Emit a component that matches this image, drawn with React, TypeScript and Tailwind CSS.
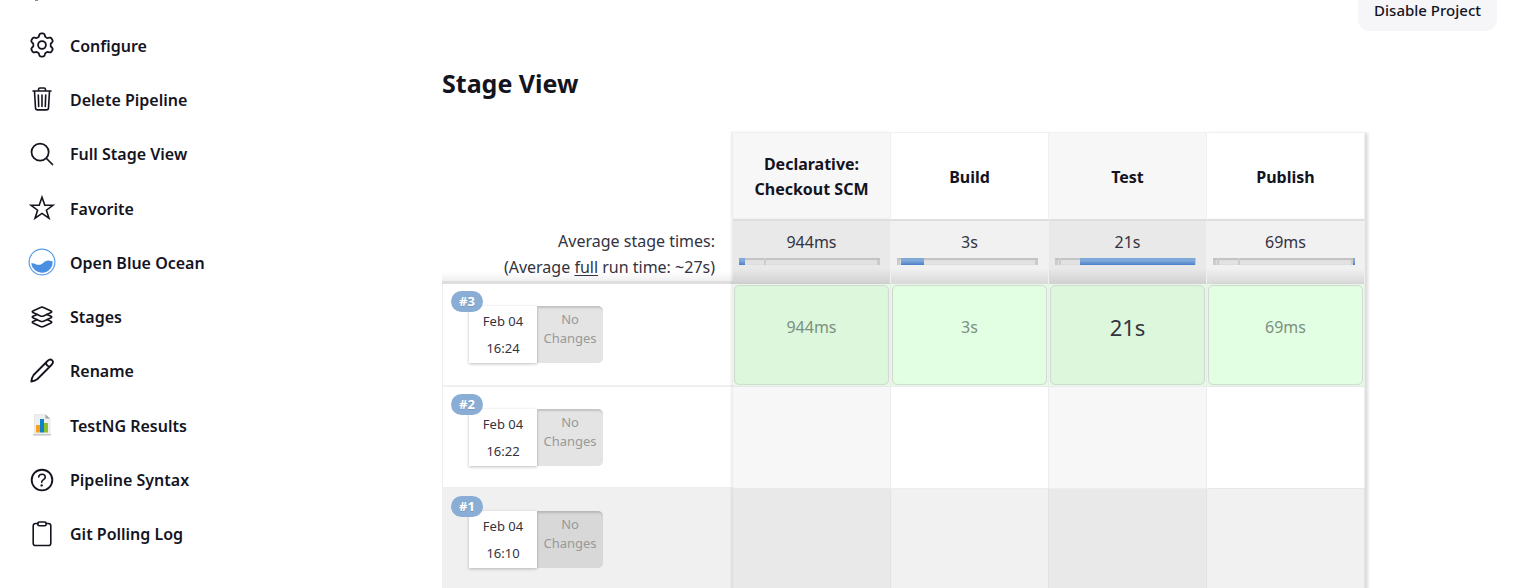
import React from 'react';
import { IoSearchOutline, IoLayersOutline, IoHelpCircleOutline } from 'react-icons/io5';

type IconProps = { children: React.ReactNode };

function Stroke({ children }: IconProps) {
  return (
    <svg viewBox="0 0 26 26" className="size-[26px]" fill="none" stroke="currentColor" strokeWidth="1.6" strokeLinecap="round" strokeLinejoin="round" aria-hidden="true">
      {children}
    </svg>
  );
}

// Six soft lobes around the hub, one of them pointing straight up.
const gearOutline =
  'M' +
  Array.from({ length: 120 }, (_, k) => {
    const a = (k / 120) * Math.PI * 2;
    const r = 10.1 + 1.5 * Math.tanh(2 * Math.cos(6 * a) + 0.2);
    return `${(13 + r * Math.sin(a)).toFixed(2)} ${(13 - r * Math.cos(a)).toFixed(2)}`;
  }).join('L') +
  'Z';

const gear = (
  <Stroke>
    <path d={gearOutline} strokeWidth="1.8" />
    <circle cx="13" cy="13" r="3.9" strokeWidth="1.8" />
  </Stroke>
);

const trash = (
  <Stroke>
    <path d="M4 5h18M5.5 5l1 17a2 2 0 0 0 2 1.9h9a2 2 0 0 0 2-1.900l1-17M9.500 5V3.500a1.500 1.500 0 0 1 1.500-1.500h4a1.500 1.500 0 0 1 1.500 1.500V5M9.300 9l.4 11.500M13 9v11.500M16.700 9l-.4 11.500" />
  </Stroke>
);

const star = (
  <Stroke>
    <path strokeLinejoin="miter" d="M13 2.200l2.800 8h8.400l-6.800 5 2.600 8L13 18.400l-7 4.800 2.600-8-6.800-5h8.400z" />
  </Stroke>
);

const ocean = (
  <svg viewBox="0 0 28 28" className="size-7" aria-hidden="true">
    <circle cx="14" cy="14" r="12.900" fill="#fff" stroke="#5b9ee8" strokeWidth="1.200" />
    <path d="M3.100 15.300c3-.8 4.600 1.600 7.700 1.500 4-.2 5.500-4.600 9.700-4.400 1.700.1 3.200.5 4.300 1.200A10.900 10.900 0 0 1 3.100 15.300z" fill="#4a90e2" />
  </svg>
);

const pencil = (
  <Stroke>
    <path strokeWidth="1.8" d="M2.300 23.700c.3-2.600 1-5 2.300-6.700L18.500 3c1.700-1.600 3.400-1.900 4.700-.7 1.300 1.300.9 3-.8 4.700L8.500 21c-1.700 1.400-3.800 2.300-6.200 2.700zM17 4.500c.2 2.200 1.700 3.900 4 4" />
  </Stroke>
);

const chart = (
  <svg viewBox="0 0 20 22" className="h-[22px] w-5" aria-hidden="true">
    <path d="M2.500.5h11l4.500 4V21h-15.500z" fill="#eeeff1" stroke="#dcdddf" strokeWidth=".6" />
    <path d="M13.500.5l4.500 4h-4.500z" fill="#a3a3a3" />
    <path d="M1 20h18v1.500H1z" fill="#c9c9c9" />
    <rect x="4" y="11" width="4" height="7.500" fill="#f9a11b" />
    <rect x="8" y="5" width="4" height="13.500" fill="#0f7fc8" />
    <rect x="12" y="9" width="4" height="9.500" fill="#8ac02c" />
  </svg>
);

const clipboard = (
  <Stroke>
    <path d="M9 2.500H6.500a2.300 2.300 0 0 0-2.300 2.300v17.400a2.300 2.300 0 0 0 2.300 2.300h13a2.300 2.300 0 0 0 2.300-2.300V4.800a2.300 2.300 0 0 0-2.300-2.300H17" />
    <rect x="8.800" y="1" width="8.400" height="3.800" rx="1.500" />
  </Stroke>
);

const tasks = [
  { label: 'Configure', icon: gear },
  { label: 'Delete Pipeline', icon: trash },
  { label: 'Full Stage View', icon: <IoSearchOutline className="size-7" /> },
  { label: 'Favorite', icon: star },
  { label: 'Open Blue Ocean', icon: ocean },
  { label: 'Stages', icon: <IoLayersOutline className="size-[26px]" /> },
  { label: 'Rename', icon: pencil },
  { label: 'TestNG Results', icon: chart },
  { label: 'Pipeline Syntax', icon: <IoHelpCircleOutline className="size-[30px] shrink-0" /> },
  { label: 'Git Polling Log', icon: clipboard },
];

// Bar positions are percentages of the full run.
const stages = [
  { name: 'Declarative: Checkout SCM', time: '944ms', marks: [18], start: 0, width: 4 },
  { name: 'Build', time: '3s', marks: [], start: 3, width: 16 },
  { name: 'Test', time: '21s', marks: [3], start: 18, width: 81 },
  { name: 'Publish', time: '69ms', marks: [3, 18], start: 99, width: 1 },
];

const runs = [
  { id: '#3', date: 'Feb 04', time: '16:24', done: true, aborted: false },
  { id: '#2', date: 'Feb 04', time: '16:22', done: false, aborted: false },
  { id: '#1', date: 'Feb 04', time: '16:10', done: false, aborted: true },
];

function edge(i: number) {
  if (i === 0) return 'shadow-[-2px_0_2px_rgba(0,0,0,0.08)]';
  if (i === stages.length - 1) return 'shadow-[3px_1px_3px_rgba(0,0,0,0.14)]';
  return '';
}

function runCell(aborted: boolean, done: boolean, odd: boolean) {
  if (aborted) return odd ? 'border-[#e2e2e2] bg-[#f1f1f1]' : 'border-[#e2e2e2] bg-[#e9e9e9]';
  if (done) return 'border-[#eaeeea] bg-[#e6f8e6]';
  return odd ? 'border-[#ededed] bg-white' : 'border-[#ededed] bg-[#f7f7f7]';
}

export default function App() {
  return (
    <div className="flex h-screen overflow-hidden bg-white font-['Noto_Sans','Open_Sans',sans-serif] text-[#14141f]">
      <aside className="w-[442px] shrink-0 pl-7">
        <div className="flex h-[18px] items-start pl-[7px]">
          <span className="h-px w-[3px] bg-[#8a8a90]" />
        </div>
        <nav aria-label="Tasks" className="grid h-[543px] auto-rows-fr">
          {tasks.map((t) => (
            <a key={t.label} href="#" className="flex items-center gap-3.5 text-base font-semibold">
              <span className="flex w-7 shrink-0 justify-center">{t.icon}</span>
              <span className="pt-px">{t.label}</span>
            </a>
          ))}
        </nav>
      </aside>
      <main className="min-w-0 flex-1">
        <div className="flex justify-end pr-[27px]">
          <button type="button" className="-mt-3 h-[43px] rounded-xl bg-[#f6f6f9] px-4 pt-px text-[15px] font-medium">
            Disable Project
          </button>
        </div>
        <h2 className="mt-[35px] text-[25px] leading-[34px] font-bold">Stage View</h2>
        <table className="mt-8 table-fixed border-separate border-spacing-0">
          <colgroup>
            <col className="w-[291px]" />
            {stages.map((s) => (
              <col key={s.name} className="w-[158px]" />
            ))}
          </colgroup>
          <thead>
            <tr className="h-[87px]">
              <td />
              {stages.map((s, i) => (
                <th
                  key={s.name}
                  scope="col"
                  className={`border-t border-r border-[#f0f0f0] px-3 pt-0.5 text-base leading-[25px] font-bold ${i % 2 ? 'bg-white' : 'bg-[#f7f7f7]'} ${edge(i)}`}
                >
                  {s.name}
                </th>
              ))}
            </tr>
            <tr className="h-[65px]">
              <th
                scope="row"
                className="border-b-[3px] border-[#dedede] bg-linear-to-b from-white from-85% to-[#f0f0f0] pt-2 pr-[18px] text-right text-base leading-[26px] font-normal text-[#333340]"
              >
                Average stage times:
                <br />
                (Average <u className="underline-offset-2">full</u> run time: ~27s)
              </th>
              {stages.map((s, i) => (
                <td
                  key={s.name}
                  className={`border-t-2 border-r border-[#dedede] border-r-[#f0f0f0] bg-linear-to-b from-75% px-1.5 text-center text-base text-[#333340] ${i % 2 ? 'from-[#f1f1f1] to-[#d8d8d8]' : 'from-[#e9e9e9] to-[#d0d0d0]'} ${edge(i)}`}
                >
                  <div className="leading-6">{s.time}</div>
                  <div className="relative mt-1 mr-1 mb-2.5 h-[7px] bg-[#e2e2e2] shadow-[inset_0_2px_1px_#c2c2c2,inset_3px_0_1px_#cccccc,inset_-3px_0_1px_#cccccc]">
                    {s.marks.map((m) => (
                      <span key={m} className="absolute inset-y-0 w-0.5 bg-[#cccccc]" style={{ left: `${m}%` }} />
                    ))}
                    <span
                      className="absolute inset-y-0 min-w-0.5 bg-linear-to-b from-[#7fa9d8] from-40% to-[#4a7fcb]"
                      style={{ left: `${s.start}%`, width: `${s.width}%` }}
                    />
                  </div>
                </td>
              ))}
            </tr>
          </thead>
          <tbody>
            {runs.map((r) => (
              <tr key={r.id} className={r.done ? 'h-[103px]' : 'h-[102px]'}>
                <th
                  scope="row"
                  className={`border-b-2 border-l border-[#efefef] p-0 pl-[26px] text-left align-top font-normal ${r.aborted ? 'bg-[#f0f0f0]' : 'bg-white'}`}
                >
                  <div className="relative mt-[22px] flex h-[57px] w-[134px] text-center">
                    <div className="w-[68px] bg-white pt-0.5 text-[13px] leading-[27px] text-[#333340] shadow-[0_1px_3px_rgba(0,0,0,0.25)]">
                      <div>{r.date}</div>
                      <div>{r.time}</div>
                    </div>
                    <div
                      className={`flex-1 rounded-r-[5px] pt-1 text-[13px] leading-[19px] text-[#999999] shadow-[inset_1px_2px_2px_rgba(0,0,0,0.15)] ${r.aborted ? 'bg-[#d8d8d8]' : 'bg-[#e4e4e4]'}`}
                    >
                      No Changes
                    </div>
                    <span className="absolute -top-[15px] -left-[18px] rounded-full bg-[#89add4] px-2 text-[13px] leading-[21px] font-bold text-white text-shadow-2xs">
                      {r.id}
                    </span>
                  </div>
                </th>
                {stages.map((s, i) => (
                  <td
                    key={s.name}
                    className={`border-r border-b p-0 text-center ${runCell(r.aborted, r.done, i % 2 === 1)} ${edge(i)}`}
                  >
                    {r.done && (
                      <div
                        className={`mx-px flex h-[100px] items-center justify-center rounded-[5px] border border-[#d0dcd0] pb-4 shadow-[inset_0_0_1px_#cfdccf] ${i % 2 ? 'bg-[#e3ffe3]' : 'bg-[#dcf7dc]'} ${s.name === 'Test' ? 'text-[22px] text-[#333340]' : 'text-base text-[#7d8f80]'}`}
                      >
                        {s.time}
                      </div>
                    )}
                  </td>
                ))}
              </tr>
            ))}
          </tbody>
        </table>
      </main>
    </div>
  );
}
